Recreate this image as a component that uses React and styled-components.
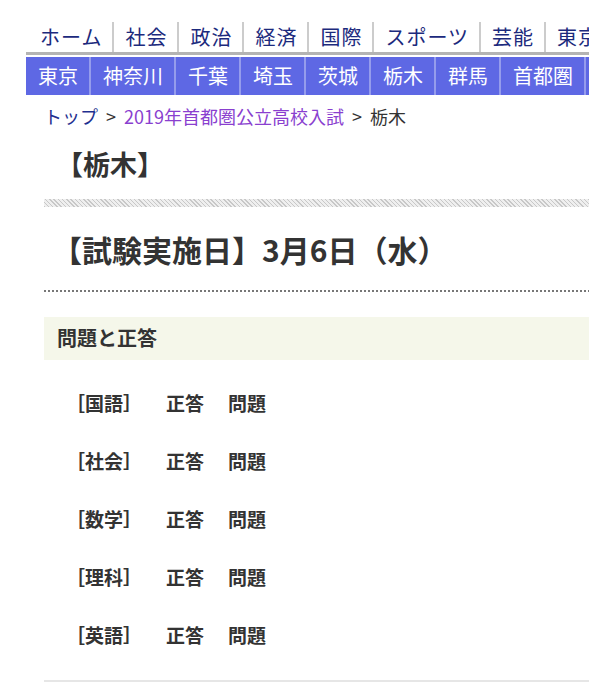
import React from 'react';
import styled, { createGlobalStyle } from 'styled-components';

const GlobalStyle = createGlobalStyle`
  html, body {
    margin: 0;
    padding: 0;
    background: #fff;
    overflow: hidden;
  }
  body {
    font-family: "Noto Sans CJK JP", "Noto Sans", sans-serif;
    color: #333;
  }
`;

const Page = styled.div`
  padding: 22px 0 0 26px;
  width: 760px;
`;

const TopNav = styled.ul`
  display: flex;
  margin: 0;
  padding: 0;
  list-style: none;
  border-bottom: 3px solid #b4b4b4;
`;

const TopItem = styled.li`
  font-size: 20px;
  letter-spacing: 1px;
  line-height: 29px;
  height: 30px;
  padding: 0 10px 0 ${p => (p.$first ? '14px' : '11px')};
  color: #1c2a7d;
  white-space: nowrap;
  border-right: ${p => (p.$last ? 'none' : '2px solid #cccccc')};
`;

const AreaNav = styled.ul`
  display: flex;
  margin: 2px 0 0;
  padding: 0;
  list-style: none;
  background: #5e68e4;
  height: 38px;
`;

const AreaItem = styled.li`
  font-size: 20px;
  line-height: 38px;
  padding: 0 11px 0 12px;
  color: #fff;
  white-space: nowrap;
  border-right: 2px solid #959cec;
`;

const Main = styled.main`
  margin-left: 18px;
`;

const Breadcrumb = styled.div`
  margin-top: 8px;
  font-size: 18px;
  line-height: 27px;
  color: #333;
`;

const Crumb = styled.a`
  color: ${p => (p.$visited ? '#8a3fcf' : '#1f2f8f')};
  text-decoration: none;
`;

const Sep = styled.span`
  margin: 0 8px;
`;

const PageTitle = styled.h1`
  margin: 15px 0 0;
  padding-left: 12px;
  font-size: 27px;
  line-height: 38px;
  font-weight: 700;
  color: #333;
`;

const Hatch = styled.div`
  margin-top: 16px;
  height: 8px;
  background: repeating-linear-gradient(
    45deg,
    #c8c8c8 0,
    #c8c8c8 1px,
    #efefef 1px,
    #efefef 3px
  );
`;

const DateTitle = styled.h2`
  margin: 21px 0 0;
  padding: 0 0 20px 8px;
  font-size: 30px;
  line-height: 42px;
  font-weight: 700;
  color: #333;
  border-bottom: 2px dotted #777;
`;

const SectionBar = styled.h3`
  margin: 25px 0 0;
  padding-left: 13px;
  height: 43px;
  line-height: 41px;
  font-size: 20px;
  font-weight: 700;
  color: #333;
  background: #f5f7ea;
`;

const SubjectList = styled.ul`
  margin: 13px 0 0;
  padding: 0 0 17px;
  list-style: none;
  border-bottom: 2px solid #e6e6e6;
`;

const SubjectRow = styled.li`
  display: flex;
  align-items: center;
  gap: 24px;
  height: 58px;
  padding-left: 22px;
  font-size: 19px;
  font-weight: 700;
  color: #333;
`;

const RowLink = styled.a`
  color: #333;
  text-decoration: none;
`;

const topItems = ['ホーム', '社会', '政治', '経済', '国際', 'スポーツ', '芸能', '東京', 'ライフ'];
const areaItems = ['東京', '神奈川', '千葉', '埼玉', '茨城', '栃木', '群馬', '首都圏', '全国'];
const subjects = ['国語', '社会', '数学', '理科', '英語'];

export default function App() {
  return (
    <>
      <GlobalStyle />
      <Page>
        <TopNav>
          {topItems.map((t, i) => (
            <TopItem key={t} $first={i === 0} $last={i === topItems.length - 1}>
              {t}
            </TopItem>
          ))}
        </TopNav>
        <AreaNav>
          {areaItems.map(t => (
            <AreaItem key={t}>{t}</AreaItem>
          ))}
        </AreaNav>
        <Main>
          <Breadcrumb>
            <Crumb href="#">トップ</Crumb>
            <Sep>&gt;</Sep>
            <Crumb href="#" $visited>2019年首都圏公立高校入試</Crumb>
            <Sep>&gt;</Sep>
            栃木
          </Breadcrumb>
          <PageTitle>【栃木】</PageTitle>
          <Hatch />
          <DateTitle>【試験実施日】3月6日（水）</DateTitle>
          <SectionBar>問題と正答</SectionBar>
          <SubjectList>
            {subjects.map(s => (
              <SubjectRow key={s}>
                <span>［{s}］</span>
                <RowLink href="#">正答</RowLink>
                <RowLink href="#">問題</RowLink>
              </SubjectRow>
            ))}
          </SubjectList>
        </Main>
      </Page>
    </>
  );
}
